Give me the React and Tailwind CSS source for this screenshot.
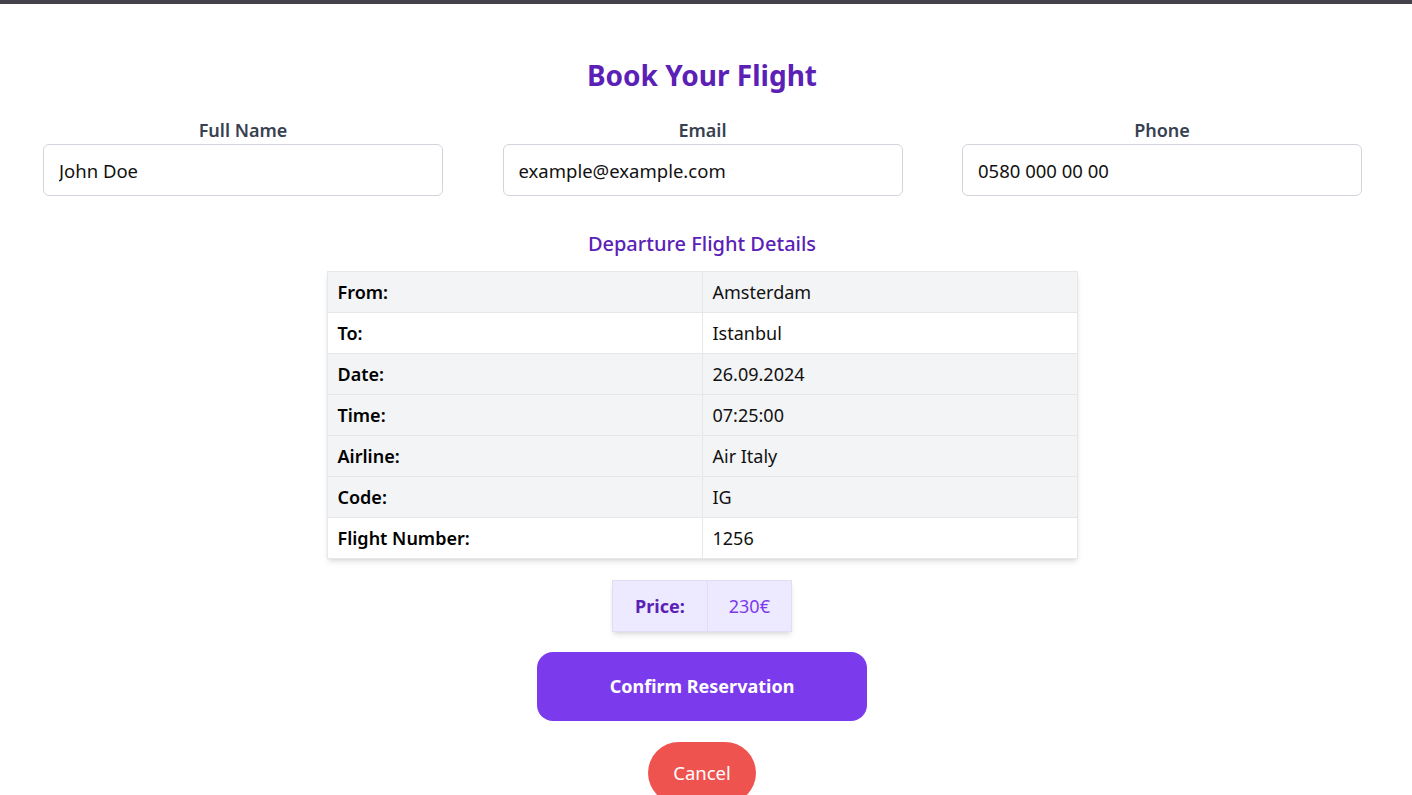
const fields = [
  { label: 'Full Name', value: 'John Doe' },
  { label: 'Email', value: 'example@example.com' },
  { label: 'Phone', value: '0580 000 00 00' },
];

const rows = [
  { label: 'From:', value: 'Amsterdam', bg: 'bg-[#f3f4f6]' },
  { label: 'To:', value: 'Istanbul', bg: 'bg-white' },
  { label: 'Date:', value: '26.09.2024', bg: 'bg-[#f3f4f6]' },
  { label: 'Time:', value: '07:25:00', bg: 'bg-[#f3f4f6]' },
  { label: 'Airline:', value: 'Air Italy', bg: 'bg-[#f3f4f6]' },
  { label: 'Code:', value: 'IG', bg: 'bg-[#f3f4f6]' },
  { label: 'Flight Number:', value: '1256', bg: 'bg-white' },
];

export default function App() {
  return (
    <div className="min-h-[795px] overflow-hidden bg-white font-['Noto_Sans',sans-serif]">
      <div className="h-1 bg-[#45414b]" />

      <div className="w-[1404px]">
        <h1 className="mt-[51px] text-center text-[28px] font-bold leading-[40px] text-[#5b21b6]">
          Book Your Flight
        </h1>

        <div className="mt-[23px] flex gap-[59.5px] pl-[43px]">
          {fields.map((f) => (
            <div key={f.label} className="flex w-[400px] flex-col items-center">
              <label className="text-[18px] font-semibold leading-[24px] text-[#374151]">
                {f.label}
              </label>
              <input
                readOnly
                value={f.value}
                className="mt-[2px] h-[52px] w-full rounded-md border border-[#d1d5db] px-[15px] text-[18.5px] text-[#111] outline-none"
              />
            </div>
          ))}
        </div>

        <h2 className="mt-[34px] text-center text-[20px] font-medium leading-[28px] text-[#5b21b6]">
          Departure Flight Details
        </h2>

        <div className="mt-[13px] flex justify-center">
          <table className="w-[751px] border-collapse shadow-md">
            <tbody>
              {rows.map((r) => (
                <tr key={r.label} className={r.bg}>
                  <td className="h-[41px] w-1/2 border border-[#e5e7eb] px-[10px] text-[18px] font-semibold text-black">
                    {r.label}
                  </td>
                  <td className="h-[41px] w-1/2 border border-[#e5e7eb] px-[10px] text-[18px] text-[#111]">
                    {r.value}
                  </td>
                </tr>
              ))}
            </tbody>
          </table>
        </div>

        <div className="mt-[21px] flex justify-center">
          <table className="border-collapse bg-[#ede9fe] shadow-md">
            <tbody>
              <tr>
                <td className="h-[51px] border border-[#e2ddf5] px-[22px] text-[18px] font-bold text-[#5b21b6]">
                  Price:
                </td>
                <td className="h-[51px] border border-[#e2ddf5] px-[21px] text-[18px] text-[#7c3aed]">
                  230€
                </td>
              </tr>
            </tbody>
          </table>
        </div>

        <div className="mt-[20px] flex flex-col items-center">
          <button className="h-[69px] w-[330px] rounded-2xl bg-[#7c3aed] text-[18px] font-bold text-white">
            Confirm Reservation
          </button>
          <button className="mt-[21px] h-[62px] w-[108px] rounded-full bg-[#ef5350] text-[18.5px] text-white">
            Cancel
          </button>
        </div>
      </div>
    </div>
  );
}
